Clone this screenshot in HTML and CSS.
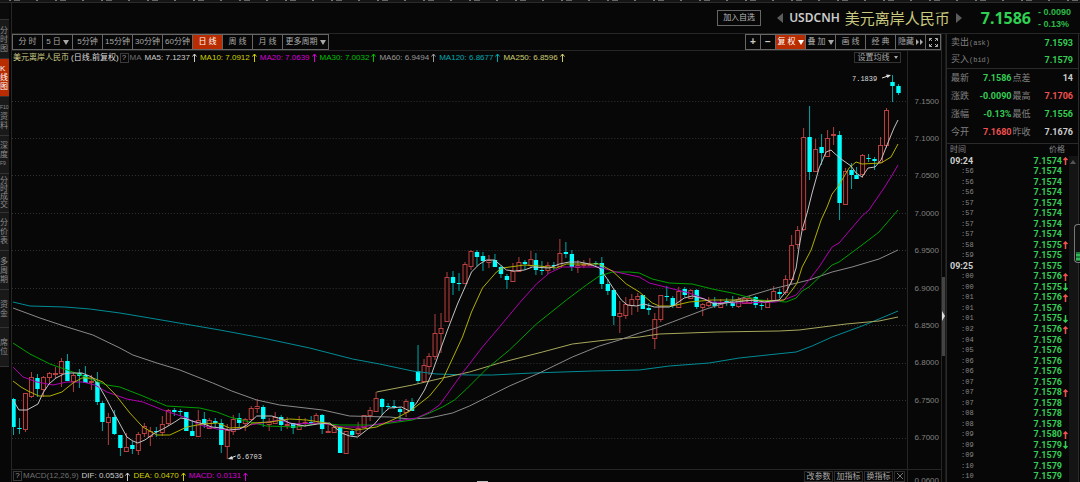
FILE: index.html
```html
<!DOCTYPE html>
<html lang="zh-CN">
<head>
<meta charset="utf-8">
<title>USDCNH 美元离岸人民币</title>
<link rel="stylesheet" href="styles.css">
</head>
<body>
<div class="app">
  <div class="menu-edge"></div>
  <nav class="side">
    <span class="side-gap"></span>
    <button class="side-tab">分时图</button>
    <button class="side-tab active">K线图</button>
    <button class="side-tab"><span>F10</span>资料</button>
    <button class="side-tab">深度<span>F9</span></button>
    <button class="side-tab four">分时成交</button>
    <button class="side-tab">分价表</button>
    <button class="side-tab">多周期</button>
    <button class="side-tab">资金</button>
    <button class="side-tab">席位</button>
  </nav>
  <div class="content">
    <header class="quote-bar">
      <button class="add-btn">加入自选</button>
      <svg class="nav-arrow" viewBox="0 0 6 10"><path d="M6 0V10L0 5Z"/></svg>
      <span class="code">USDCNH</span>
      <h1 class="name">美元离岸人民币</h1>
      <svg class="nav-arrow" viewBox="0 0 6 10"><path d="M0 0V10L6 5Z"/></svg>
      <span class="last">7.1586</span>
      <span class="change"><span>- 0.0090</span><span>- 0.13%</span></span>
    </header>
    <div class="body">
      <main class="chart">
        <div class="toolbar">
          <div class="group">
            <button class="tool">分 时</button>
            <button class="tool">5 日<i class="caret"></i></button>
            <button class="tool">5分钟</button>
            <button class="tool">15分钟</button>
            <button class="tool">30分钟</button>
            <button class="tool">60分钟</button>
            <button class="tool active">日 线</button>
            <button class="tool">周 线</button>
            <button class="tool">月 线</button>
            <button class="tool wide">更多周期<i class="caret"></i></button>
          </div>
          <div class="group">
            <button class="tool small sign">+</button>
            <button class="tool small sign">−</button>
            <button class="tool active">复 权<i class="caret"></i></button>
            <button class="tool">叠 加<i class="caret"></i></button>
            <button class="tool">画 线</button>
            <button class="tool">经 典</button>
            <button class="tool">隐藏<svg class="ff" viewBox="0 0 7 6"><path d="M0 0L3 3L0 6ZM4 0L7 3L4 6Z"/></svg></button>
            <button class="tool small" aria-label="全屏"><svg class="full" viewBox="0 0 9 9"><path d="M3 .5H.5V3M6 .5H8.5V3M3 8.5H.5V6M6 8.5H8.5V6M.5 .5L3 3M8.5 .5L6 3M.5 8.5L3 6M8.5 8.5L6 6"/></svg></button>
          </div>
        </div>
        <div class="panes">
          <section class="pane">
            <div class="legend">
              <span class="pair">美元离岸人民币</span>
              <span class="period">(日线,前复权)</span>
              <button class="help">?</button>
              <span class="dim">MA</span>
              <span class="ma white">MA5: 7.1237<svg viewBox="0 0 5 9"><path d="M2.5 9V1M.5 3.5L2.5 1L4.5 3.5"/></svg></span>
              <span class="ma yellow">MA10: 7.0912<svg viewBox="0 0 5 9"><path d="M2.5 9V1M.5 3.5L2.5 1L4.5 3.5"/></svg></span>
              <span class="ma magenta">MA20: 7.0639<svg viewBox="0 0 5 9"><path d="M2.5 9V1M.5 3.5L2.5 1L4.5 3.5"/></svg></span>
              <span class="ma green">MA30: 7.0032<svg viewBox="0 0 5 9"><path d="M2.5 9V1M.5 3.5L2.5 1L4.5 3.5"/></svg></span>
              <span class="ma grey">MA60: 6.9494<svg viewBox="0 0 5 9"><path d="M2.5 9V1M.5 3.5L2.5 1L4.5 3.5"/></svg></span>
              <span class="ma cyan">MA120: 6.8677<svg viewBox="0 0 5 9"><path d="M2.5 9V1M.5 3.5L2.5 1L4.5 3.5"/></svg></span>
              <span class="ma cream">MA250: 6.8596<svg viewBox="0 0 5 9"><path d="M2.5 9V1M.5 3.5L2.5 1L4.5 3.5"/></svg></span>
              <button class="ma-set">设置均线<i class="caret tiny"></i></button>
            </div>
            <svg class="plot" id="plot" viewBox="12 64 896 405" preserveAspectRatio="none"></svg>
          </section>
          <div class="axis">
            <span>7.1500</span><span>7.1000</span><span>7.0500</span><span>7.0000</span><span>6.9500</span><span>6.9000</span><span>6.8500</span><span>6.8000</span><span>6.7500</span><span>6.7000</span>
          </div>
          <section class="macd">
            <button class="help">?</button>
            <span class="dim">MACD(12,26,9)</span>
            <span class="ma white">DIF: 0.0536<svg viewBox="0 0 5 9"><path d="M2.5 9V1M.5 3.5L2.5 1L4.5 3.5"/></svg></span>
            <span class="ma yellow">DEA: 0.0470<svg viewBox="0 0 5 9"><path d="M2.5 9V1M.5 3.5L2.5 1L4.5 3.5"/></svg></span>
            <span class="ma magenta">MACD: 0.0131<svg viewBox="0 0 5 9"><path d="M2.5 9V1M.5 3.5L2.5 1L4.5 3.5"/></svg></span>
            <span class="macd-tools">
              <button class="mini">改参数</button>
              <button class="mini">加指标</button>
              <button class="mini">换指标</button>
              <button class="mini close" aria-label="关闭"><svg viewBox="0 0 8 8"><path d="M1 1L7 7M7 1L1 7"/></svg></button>
            </span>
            <i class="grip"></i>
          </section>
          <div class="macd-axis">0.0600</div>
        </div>
      </main>
      <div class="splitter"><button class="split-handle" aria-label="收起"></button></div>
      <aside class="panel">
        <dl class="book">
          <dt>卖出<small>(ask)</small></dt><dd class="down">7.1593</dd>
          <dt>买入<small>(bid)</small></dt><dd class="down">7.1579</dd>
        </dl>
        <dl class="stats">
          <dt>最新</dt><dd class="down">7.1586</dd><dt>点差</dt><dd>14</dd>
          <dt>涨跌</dt><dd class="down">-0.0090</dd><dt>最高</dt><dd class="up">7.1706</dd>
          <dt>涨幅</dt><dd class="down">-0.13%</dd><dt>最低</dt><dd class="down">7.1556</dd>
          <dt>今开</dt><dd class="up">7.1680</dd><dt>昨收</dt><dd>7.1676</dd>
        </dl>
        <div class="tick-head"><span>时间</span><span>价格</span></div>
        <div class="ticks">
          <table><tbody id="ticks"></tbody></table>
          <div class="scroll"><i></i></div>
        </div>
      </aside>
    </div>
  </div>
  <div class="meter"><i></i></div>
</div>
<script src="chart.js"></script>
</body>
</html>
```

FILE: styles.css
```css
* { box-sizing: border-box; }
body {
  margin: 0;
  background: #070707;
  color: #c0c0c0;
  font: 8px/10px "Liberation Sans", "Noto Sans CJK SC", sans-serif;
  overflow: hidden;
}
button {
  margin: 0;
  padding: 0;
  border: 0;
  background: none;
  color: inherit;
  font: inherit;
  white-space: nowrap;
}
i { font-style: normal; }
dl, dd, h1 { margin: 0; }

.app {
  position: relative;
  display: grid;
  grid-template: 3px minmax(0, 1fr) / 11px minmax(0, 1fr);
  height: 100vh;
}
.menu-edge {
  grid-column: 1 / -1;
  background:
    repeating-linear-gradient(90deg, #0000 0 9px, #777 9px 11px, #0000 11px 14px, #666 14px 20px, #0000 20px 36px, #777 36px 38px, #0000 38px 46px) 0 0 / 100% 1px no-repeat,
    #151515;
  border-bottom: 1px solid #2a2a2a;
}

.side {
  display: flex;
  flex-direction: column;
  width: 9px;
}
.side-gap { height: 17px; background: #0b0b0b; border-bottom: 1px solid #333; }
.side-tab {
  display: flex;
  flex-direction: column;
  justify-content: center;
  height: 39px;
  width: 9px;
  overflow: hidden;
  background: #191919;
  border-bottom: 1px solid #333;
  color: #8c8c8c;
  line-height: 9px;
  white-space: normal;
  word-break: break-all;
  text-align: left;
}
.side-tab:nth-child(odd) { height: 38px; }
.side-tab span { font-size: 5px; word-break: keep-all; }
.side-tab.four { line-height: 8px; }
.side-tab.active { background: #b92c00; color: #fff; }

.content {
  display: flex;
  flex-direction: column;
  min-width: 0;
  border-left: 1px solid #262626;
}
.quote-bar {
  display: flex;
  align-items: center;
  justify-content: flex-end;
  height: 31px;
  padding-right: 8px;
  border-bottom: 1px solid #262626;
}
.add-btn {
  width: 44px;
  height: 16px;
  margin-right: 16px;
  border: 1px solid #666;
  color: #bbb;
}
.nav-arrow { width: 6px; height: 10px; fill: #5c5c5c; }
.code {
  margin: 0 5px 0 6px;
  color: #ccc;
  font: 600 12px/16px "Noto Sans", sans-serif;
}
.name {
  margin-right: 6px;
  color: #c9c97f;
  font: 400 15px/20px "Noto Sans CJK SC", sans-serif;
}
.last {
  margin: 0 7px 0 19px;
  color: #2fd151;
  font: 700 16px/20px "Noto Sans", sans-serif;
}
.change {
  display: flex;
  flex-direction: column;
  width: 34px;
  color: #2cb849;
  font: 700 9px/12px "Liberation Sans", sans-serif;
  white-space: nowrap;
}

.body { display: flex; flex: 1; min-height: 0; }
.chart { display: flex; flex-direction: column; flex: 1; min-width: 0; }
.toolbar {
  display: flex;
  justify-content: space-between;
  height: 17px;
  border-bottom: 1px solid #262626;
}
.group { display: flex; height: 16px; border: 1px solid #666; border-width: 1px 0 1px 1px; }
.tool {
  display: flex;
  align-items: center;
  justify-content: center;
  gap: 2px;
  width: 30px;
  border-right: 1px solid #666;
  color: #a8a8a8;
}
.tool.wide { width: 46px; }
.tool.small { width: 15px; }
.tool.sign { font-size: 10px; font-weight: 700; color: #ccc; }
.tool.active { background: #b92c00; color: #fff; }
.caret {
  width: 0;
  border: 3px solid transparent;
  border-top: 5px solid currentColor;
  border-bottom: 0;
}
.caret.tiny { border-width: 3px 2px 0; }
.ff { width: 7px; height: 6px; fill: #aaa; }
.full { width: 9px; height: 9px; fill: none; stroke: #aaa; stroke-width: 1; }

.panes {
  display: grid;
  grid-template: minmax(0, 1fr) 13px / minmax(0, 1fr) 34px;
  flex: 1;
  min-height: 0;
}
.pane { display: flex; flex-direction: column; min-width: 0; min-height: 0; }
.legend, .macd { display: flex; align-items: center; white-space: nowrap; }
.legend { height: 13px; padding: 0 6px 0 1px; }
.pair { color: #cccc88; }
.period { margin: 0 1px 0 2px; color: #ddd; }
.help {
  width: 9px;
  height: 10px;
  border: 1px solid #3a3a3a;
  color: #999;
  line-height: 8px;
}
.dim { margin: 0 3px 0 1px; color: #707070; }
.ma { display: flex; align-items: center; gap: 2px; margin-right: 3px; }
.ma svg { width: 5px; height: 9px; fill: none; stroke: currentColor; }
.white { color: #ccc; }
.yellow { color: #d0d000; }
.magenta { color: #d400d4; }
.green { color: #00c000; }
.grey { color: #999; }
.cyan { color: #00a8b0; }
.cream { color: #cccc70; }
.ma-set {
  display: flex;
  align-items: center;
  justify-content: center;
  gap: 4px;
  width: 47px;
  height: 11px;
  margin-left: auto;
  border: 1px solid #333;
  color: #aaa;
}
.plot { display: block; flex: 1; width: 100%; min-height: 0; }
.plot text { font: 7px "Liberation Mono", monospace; fill: #ddd; }

.axis {
  display: grid;
  grid-auto-rows: 1fr;
  align-items: center;
  padding: 32px 2px 12px 0;
  border-left: 1px solid #262626;
  color: #808080;
  font-size: 8px;
  text-align: right;
}
.macd {
  position: relative;
  padding: 0 2px 0 1px;
  border-top: 1px solid #262626;
}
.macd-tools { display: flex; gap: 1px; margin-left: auto; }
.mini { width: 29px; height: 11px; border: 1px solid #2c2c2c; color: #aaa; line-height: 9px; }
.mini.close { width: 11px; }
.mini svg { display: block; width: 8px; height: 8px; margin: 0 auto; stroke: #777; }
.grip {
  position: absolute;
  left: 52%;
  bottom: 0;
  width: 11px;
  height: 1px;
  background: #bbb;
}
.macd-axis {
  overflow: hidden;
  padding: 6px 2px 0 0;
  border: 1px solid #262626;
  border-width: 1px 0 0 1px;
  color: #808080;
  text-align: right;
}

.splitter {
  display: flex;
  align-items: center;
  width: 5px;
  border-left: 1px solid #262626;
  border-right: 1px solid #1c1c1c;
}
.split-handle {
  display: flex;
  align-items: center;
  width: 4px;
  height: 79px;
  margin-top: 116px;
  background: #444;
}
.split-handle::before {
  content: "";
  border: 5px solid transparent;
  border-left: 3px solid #ddd;
  border-right: 0;
}

.panel {
  display: flex;
  flex-direction: column;
  width: 133px;
  margin-right: 1px;
  border-left: 1px solid #2a2a2a;
  border-right: 1px solid #2a2a2a;
}
.panel dt { color: #808080; font: 9px/12px "Noto Sans CJK SC", sans-serif; }
.panel dd { color: #ccc; font: 700 9px/12px Roboto, sans-serif; text-align: right; }
.panel small { font: 7px/12px "Liberation Mono", monospace; }
.panel .down { color: #35cc55; }
.panel .up { color: #f05050; }
.book, .stats {
  display: grid;
  align-items: center;
  padding: 0 5px 0 4px;
  border-bottom: 1px solid #2a2a2a;
}
.book { grid-template-columns: 1fr auto; grid-auto-rows: 17px; }
.stats {
  grid-template-columns: 20px 1fr 20px 1fr;
  grid-auto-rows: 18px;
  column-gap: 1px;
  padding-bottom: 2px;
}
.tick-head {
  display: flex;
  justify-content: space-between;
  padding: 0 13px 0 3px;
  color: #888;
  line-height: 12px;
}
.ticks { display: flex; flex: 1; min-height: 0; }
.ticks table { flex: 1; height: 100%; border-collapse: collapse; line-height: 9px; }
.ticks td { padding: 0; }
.ticks .time { width: 30px; padding-left: 3px; color: #888; font: 7px/9px "Liberation Mono", monospace; }
.ticks .sec { padding-left: 14px; }
.ticks .minute { color: #ccc; font: 700 9px/9px Roboto, sans-serif; }
.ticks .price { color: #35cc55; font: 700 9px/9px Roboto, sans-serif; text-align: right; }
.ticks .mark { width: 7px; padding-left: 1px; }
.ticks .mark svg { display: block; width: 5px; height: 8px; fill: none; stroke: #f05050; stroke-width: 1.5; }
.ticks .mark .fall { stroke: #35cc55; }
.scroll { width: 9px; padding: 4px 0 0 1px; background: #141414; }
.scroll i { display: block; width: 0; border: 3px solid transparent; border-top: 0; border-bottom: 4px solid #555; }

.meter {
  position: absolute;
  right: 0;
  top: 224px;
  display: flex;
  align-items: flex-end;
  width: 6px;
  height: 39px;
  padding: 1px 0 1px 1px;
  background: #111;
  border: 1px solid #777;
  border-right: 0;
  border-radius: 4px 0 0 4px;
}
.meter i {
  width: 100%;
  height: 9px;
  background: repeating-linear-gradient(#1d7a38 0 2px, #35b558 2px 4px);
}
```

FILE: chart.js
```js
// high, body top, body bottom, low, rising
const candles = [
[398,399,427,435,0],[418,428,429,434,0],[393,393,429,432,1],[372,377,396,398,1],[374,378,389,397,0],
[376,377,389,397,1],[372,373,377,383,1],[367,373,374,378,1],[358,361,373,387,1],[354,361,381,381,0],
[373,375,381,392,1],[369,373,376,388,0],[366,375,383,383,0],[375,381,382,390,1],[372,382,402,405,0],
[401,403,422,431,0],[413,417,422,445,1],[410,417,434,435,0],[435,435,448,456,0],[433,447,451,451,1],
[441,445,449,454,0],[432,434,450,455,1],[423,426,433,437,1],[427,431,436,446,1],[427,431,432,437,0],
[416,424,432,436,1],[409,410,423,426,1],[408,410,412,416,0],[409,411,412,416,0],[412,412,431,431,0],
[420,431,436,436,0],[410,420,436,437,1],[412,419,424,428,0],[418,420,428,428,1],[418,421,423,427,0],
[419,423,445,453,0],[424,430,446,459,1],[415,419,431,435,1],[413,418,423,427,0],[418,419,423,431,1],
[406,408,419,421,1],[399,406,408,413,1],[405,407,419,427,0],[418,422,424,431,1],[412,417,423,423,1],
[415,417,425,431,0],[417,424,425,429,1],[423,423,428,434,0],[416,425,429,429,1],[418,422,423,427,1],
[416,422,423,425,0],[413,415,423,424,1],[414,415,429,434,0],[425,431,432,433,1],[427,427,432,432,1],
[427,427,453,453,0],[431,431,453,453,1],[429,431,435,437,0],[422,428,433,436,1],[415,415,427,427,1],
[407,410,415,421,1],[392,398,411,412,1],[398,399,407,415,0],[403,406,407,409,0],[400,406,407,409,0],
[407,409,412,422,0],[399,401,412,417,1],[398,402,411,411,0],[345,371,381,384,0],[359,365,381,381,1],
[353,356,366,375,1],[314,333,356,360,1],[313,328,333,353,1],[272,277,321,321,1],[271,277,283,295,0],
[273,283,284,291,0],[262,264,283,284,1],[250,251,266,270,1],[250,252,257,266,0],[252,256,261,271,0],
[255,260,262,268,1],[254,260,267,267,0],[265,267,274,278,0],[274,276,280,289,0],[263,271,281,281,1],
[257,262,271,271,1],[260,262,264,270,0],[251,259,265,268,1],[253,260,270,275,0],[261,270,271,275,0],
[262,265,270,274,1],[262,265,266,270,0],[239,253,266,266,1],[242,252,254,258,0],[250,254,267,271,0],
[260,265,267,273,1],[260,264,265,268,1],[258,264,265,266,1],[261,263,264,266,0],[257,263,284,289,0],
[279,284,291,295,0],[289,290,316,325,0],[301,313,316,333,1],[297,304,315,319,1],[294,299,305,315,1],
[293,296,299,312,1],[295,295,309,309,0],[303,308,310,315,0],[313,319,338,349,1],[295,295,319,322,1],
[286,296,297,301,0],[296,298,306,308,0],[287,291,307,307,1],[287,289,295,297,0],[289,290,298,299,1],
[289,290,307,309,0],[303,304,307,316,1],[297,302,305,307,1],[297,302,306,308,0],[299,303,307,307,1],
[298,301,303,306,0],[296,303,306,308,0],[297,299,306,308,1],[298,298,303,303,1],[296,298,303,303,1],
[296,297,305,308,0],[300,305,306,310,0],[298,302,307,307,1],[286,291,301,301,1],[289,292,294,298,0],
[275,279,292,295,1],[235,245,279,284,1],[226,230,244,249,1],[128,137,229,231,1],[106,137,172,180,0],
[139,149,171,172,1],[134,147,153,165,0],[130,138,156,157,1],[127,134,135,145,1],[131,135,203,220,0],
[168,171,204,204,1],[163,170,175,189,0],[167,175,179,179,0],[154,155,174,178,1],[154,158,159,162,0],
[157,159,161,170,0],[137,145,162,162,1],[108,110,145,148,1],[75,82,86,102,0],[84,86,93,95,0]
];

const averages = {
  "#008c96": "13,302 30,306 65,307 90,309 120,313 150,318 185,324 220,330 263,338 310,348 353,359 380,364 413,371 437,374 470,375 493,375 533,373 593,371 640,370 670,366 710,363 740,358 787,353 797,352 813,346 833,337 863,326 880,319 899,311",
  "#a8a85c": "377,392 413,385 443,378 470,372 500,363 543,352 573,344 607,340 640,337 660,334 717,332 780,331 800,330 847,324 880,321 899,317",
  "#8a8a8a": "13,308 40,318 67,327 93,335 120,348 133,355 157,363 180,370 213,383 232,391 257,400 280,405 323,410 350,416 390,417 410,419 430,418 453,413 470,406 482,400 510,386 540,373 573,357 600,346 620,340 640,333 657,328 673,322 707,309 723,304 743,298 773,289 810,280 833,272 853,267 880,259 899,250",
  "#00a000": "13,343 30,354 50,364 73,372 93,380 107,385 120,387 143,396 167,406 200,408 217,412 230,417 250,422 267,426 297,427 320,423 340,425 377,425 413,420 430,413 443,407 455,400 467,389 487,369 510,350 537,324 567,300 587,285 600,276 613,272 630,272 640,273 653,279 670,283 693,284 713,289 733,293 760,300 787,302 797,298 803,291 810,287 833,265 840,262 863,245 880,232 899,210",
  "#b000b0": "13,367 23,377 37,382 53,385 67,382 83,382 95,385 107,392 127,399 143,402 163,410 187,418 200,425 217,429 230,430 240,429 250,425 280,420 293,424 320,423 343,427 363,427 390,422 417,418 430,412 440,405 463,373 483,347 500,327 520,303 537,284 550,273 563,267 600,267 617,272 640,277 650,283 670,288 690,293 713,302 740,303 777,302 787,299 797,295 810,280 820,267 833,247 840,243 857,223 863,216 870,210 885,188 892,177 899,165",
  "#b0b000": "13,381 21,387 28,391 39,396 50,396 62,392 73,383 82,378 93,378 103,382 115,394 130,413 143,427 157,435 170,435 187,427 203,424 218,423 230,428 247,427 253,423 270,422 290,419 307,420 327,423 337,427 357,430 377,427 397,418 412,410 430,396 443,380 463,337 472,312 483,288 497,272 503,268 525,265 540,266 557,268 567,264 600,264 613,271 627,284 640,292 653,303 660,306 673,306 690,302 713,300 740,300 767,301 785,300 793,290 798,283 803,267 812,250 822,220 828,207 833,194 840,185 850,168 857,162 863,164 882,163 892,157 899,144",
  "#c4c4c4": "13,400 19,410 27,410 38,404 43,393 49,384 56,378 64,374 70,373 82,373 92,377 98,384 106,398 114,413 120,424 127,437 133,441 138,443 145,440 155,433 165,428 175,422 181,418 187,419 192,421 204,424 212,427 222,428 229,430 240,429 247,425 257,416 272,416 282,419 290,423 305,426 318,424 330,423 342,433 350,436 358,437 367,430 375,424 385,412 390,408 402,407 410,411 417,403 425,390 432,374 440,352 448,330 458,304 466,286 472,272 480,264 487,260 495,260 501,265 507,270 515,271 525,270 533,267 550,268 560,264 570,262 580,262 590,264 600,268 608,279 615,290 622,300 628,305 637,306 645,304 655,307 670,307 675,305 685,298 693,296 705,299 715,304 735,302 755,300 765,302 780,300 788,290 793,280 797,268 800,247 803,230 808,213 813,193 820,168 827,152 832,150 835,153 842,159 852,166 857,173 863,177 869,168 876,167 882,160 888,145 895,128 899,120"
};

let svg = "";
for (let k = 0; k < 10; k++) {
  const y = Math.round(100.5 + k * 37.45) + 0.5;
  svg += `<path d="M12 ${y}H908" stroke="#333" stroke-dasharray="1 2"/>`;
}
candles.forEach(([high, top, bottom, low, rising], i) => {
  const x = Math.round(13.3 + i * 5.945);
  if (rising) {
    const h = Math.max(bottom - top, 1);
    svg += `<path d="M${x + 0.5} ${high}V${top}M${x + 0.5} ${bottom}V${low}" stroke="#b04040"/>` +
      `<rect x="${x - 1.5}" y="${top + 0.5}" width="4" height="${h}" fill="#160606" stroke="#b84242"/>`;
  } else {
    svg += `<path d="M${x + 0.5} ${high}V${low}" stroke="#00a8a8"/>` +
      `<rect x="${x - 1.7}" y="${top}" width="4.4" height="${Math.max(bottom - top, 1)}" fill="#00ffff"/>`;
  }
});
for (const [color, points] of Object.entries(averages)) {
  svg += `<polyline points="${points}" fill="none" stroke="${color}"/>`;
}
svg += `<text x="853" y="81">7.1839</text><path d="M883 78L889 76" stroke="#ddd"/><path d="M892 75L887 74.5L888.5 78Z" fill="#ddd"/>` +
  `<text x="237" y="459">6.6703</text><path d="M236 456L231 458" stroke="#ddd"/><path d="M228 459L232 456L233.5 459.5Z" fill="#ddd"/>`;
document.getElementById("plot").innerHTML = svg;

const ticks = [
["09:24",7.1574,1],[":56",7.1574],[":56",7.1574],[":56",7.1574],[":57",7.1574],[":57",7.1574],[":57",7.1574],[":57",7.1574],
[":58",7.1575,1],[":59",7.1575],["09:25",7.1575],[":00",7.1576,1],[":00",7.1575,-1],[":01",7.1576,1],[":01",7.1576],[":01",7.1575,-1],
[":02",7.1576,1],[":04",7.1576],[":05",7.1576],[":06",7.1576],[":06",7.1576],[":07",7.1576],[":07",7.1578,1],[":07",7.1578],
[":08",7.1578],[":08",7.1578],[":09",7.1580,1],[":09",7.1579,-1],[":09",7.1579],[":10",7.1579],[":10",7.1579]
];
const arrows = {
  1: '<svg viewBox="0 0 5 8"><path d="M2.5 8V1M.5 3L2.5 1L4.5 3"/></svg>',
  "-1": '<svg class="fall" viewBox="0 0 5 8"><path d="M2.5 0V7M.5 5L2.5 7L4.5 5"/></svg>'
};
document.getElementById("ticks").innerHTML = ticks.map(([time, price, move]) =>
  `<tr><td class="time ${time[0] === ":" ? "sec" : "minute"}">${time}</td><td class="price">${price.toFixed(4)}</td><td class="mark">${arrows[move] || ""}</td></tr>`
).join("");
```
